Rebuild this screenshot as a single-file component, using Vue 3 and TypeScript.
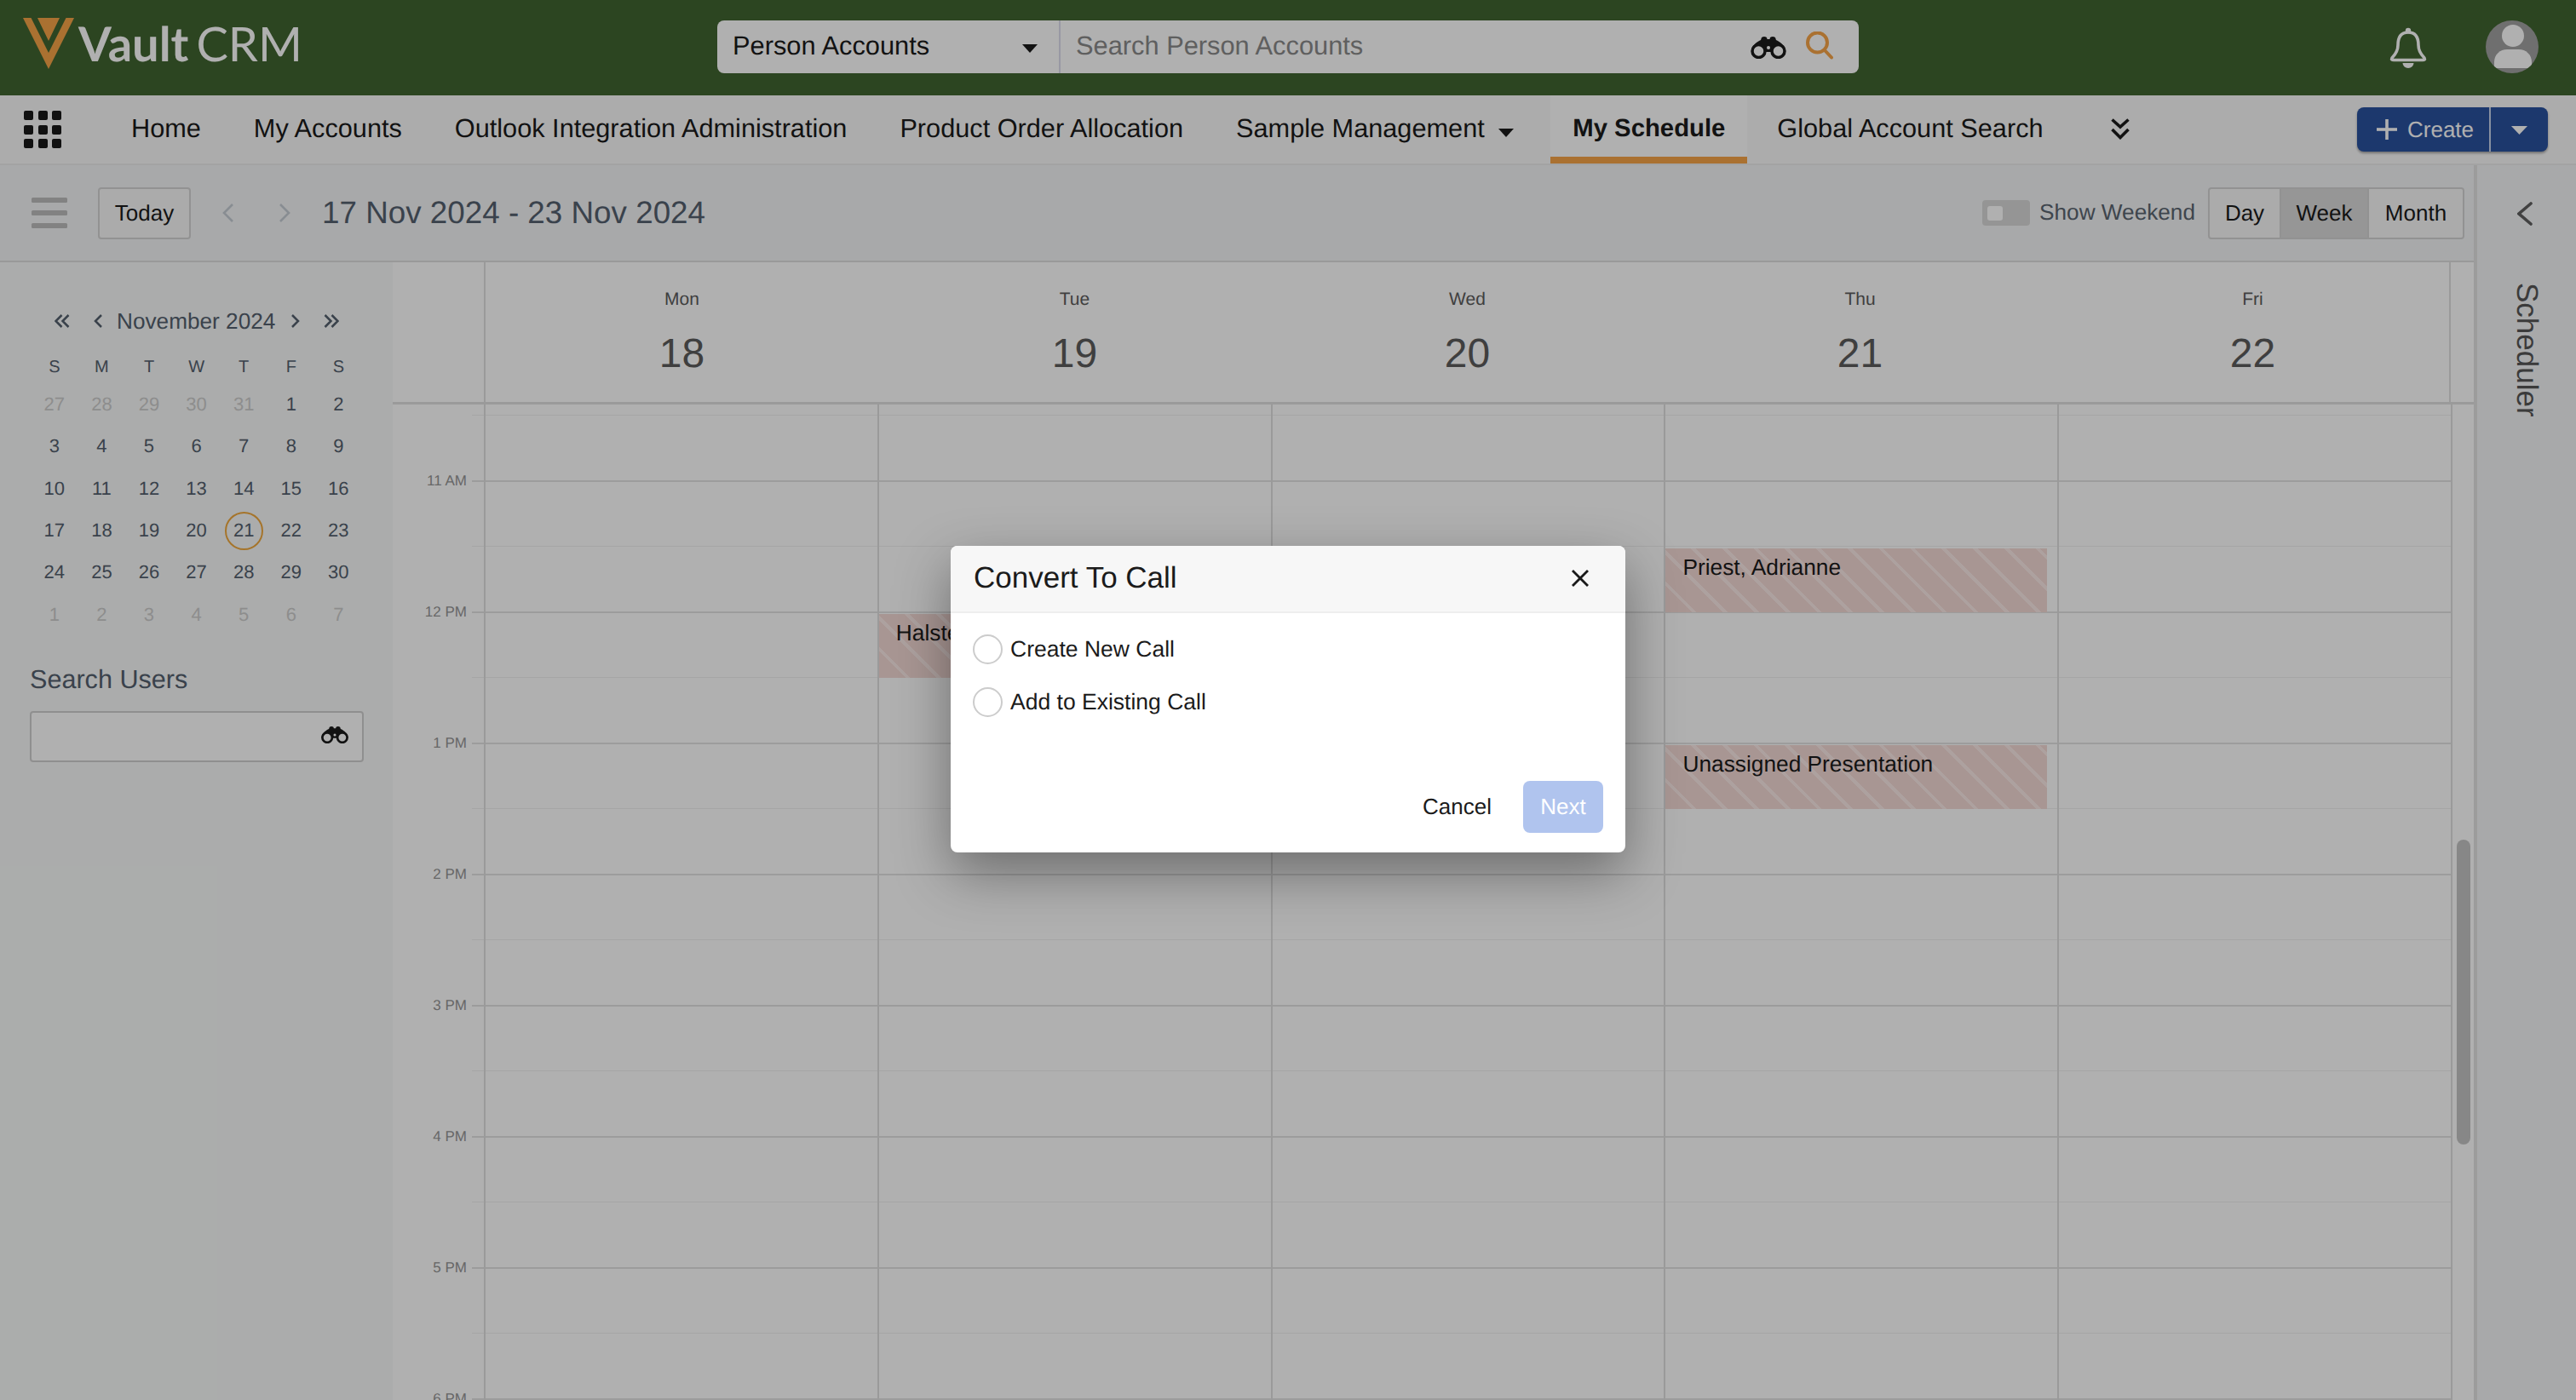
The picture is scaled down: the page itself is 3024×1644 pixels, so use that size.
<script setup lang="ts">
interface DayCell { n: number; muted: boolean; today: boolean }
interface Slot { hour: boolean; label: string }
interface CalEvent { title: string; col: number; top: number }

const navItems: string[] = ['Home', 'My Accounts', 'Outlook Integration Administration', 'Product Order Allocation']
const weekdays: string[] = ['S', 'M', 'T', 'W', 'T', 'F', 'S']

const cells: DayCell[] = []
for (const n of [27, 28, 29, 30, 31]) cells.push({ n, muted: true, today: false })
for (let n = 1; n <= 30; n++) cells.push({ n, muted: false, today: n === 21 })
for (let n = 1; n <= 7; n++) cells.push({ n, muted: true, today: false })

const days = [
  { name: 'Mon', num: 18 },
  { name: 'Tue', num: 19 },
  { name: 'Wed', num: 20 },
  { name: 'Thu', num: 21 },
  { name: 'Fri', num: 22 },
]

const hourLabels: string[] = ['11 AM', '12 PM', '1 PM', '2 PM', '3 PM', '4 PM', '5 PM', '6 PM']
const slots: Slot[] = []
for (let i = 0; i < 16; i++) {
  const hour = i % 2 === 1
  slots.push({ hour, label: hour ? hourLabels[(i - 1) / 2] : '' })
}

const events: CalEvent[] = [
  { title: 'Halsted', col: 1, top: 246 },
  { title: 'Priest, Adrianne', col: 3, top: 169 },
  { title: 'Unassigned Presentation', col: 3, top: 400 },
]
const eventsFor = (col: number): CalEvent[] => events.filter((e) => e.col === col)
</script>

<template>
  <div class="app">
    <header class="topbar">
      <svg class="logo" width="60" height="60" viewBox="0 0 60 60">
        <polygon points="0,0 60,0 30,60" fill="#f6a448" />
        <polygon points="9.500,0 17,0 30,27 43,0 50.500,0 30,41" fill="#406431" />
      </svg>
      <div class="brand"><span class="vault">Vault</span><span class="crm">CRM</span></div>

      <div class="searchbar">
        <div class="scope">
          <span>Person Accounts</span>
          <svg class="scope-caret" width="18" height="10" viewBox="0 0 18 10"><polygon points="0,0 18,0 9,10" fill="#1b1b1b" /></svg>
        </div>
        <div class="query">
          <span class="placeholder">Search Person Accounts</span>
          <svg class="binoculars" width="44" height="26" viewBox="0 0 44 26">
            <path d="M2 15 C4 9 9 6 13 4 L14 1 Q17 -1 20 1 L20.500 3 H23.500 L24 1 Q27 -1 30 1 L31 4 C35 6 40 9 42 15 L42 18 H2Z" fill="#1b1b1b" />
            <circle cx="10.500" cy="17" r="7.500" fill="#fff" stroke="#1b1b1b" stroke-width="3.500" />
            <circle cx="33.500" cy="17" r="7.500" fill="#fff" stroke="#1b1b1b" stroke-width="3.500" />
            <circle cx="22" cy="13" r="2" fill="#fff" />
          </svg>
          <svg class="magnifier" width="32" height="36" viewBox="0 0 32 36" fill="none" stroke="#f6a448" stroke-width="4">
            <circle cx="13.500" cy="13" r="11.500" />
            <line x1="22" y1="22" x2="30" y2="30.500" stroke-linecap="round" />
          </svg>
        </div>
      </div>

      <svg class="bell" width="44" height="48" viewBox="0 0 44 48">
        <path d="M22 6 C13 6 10 12 10 21 C10 28 7 32 3 36 C2 38 3 38.500 5 38.500 H39 C41 38.500 42 38 41 36 C37 32 34 28 34 21 C34 12 31 6 22 6Z" fill="none" stroke="#fff" stroke-width="3.600" stroke-linejoin="round" />
        <circle cx="22" cy="4" r="3.200" fill="#fff" />
        <path d="M15.500 42 H28.500 A6.500 6 0 0 1 15.500 42Z" fill="#fff" />
      </svg>
      <svg class="avatar" width="62" height="62" viewBox="0 0 62 62">
        <defs><clipPath id="avatar-clip"><circle cx="31" cy="31" r="31" /></clipPath></defs>
        <g clip-path="url(#avatar-clip)">
          <rect width="62" height="62" fill="#a1a1a1" />
          <circle cx="32" cy="18" r="13" fill="#fff" />
          <path d="M10 56 V49 C10 40 17 34 25 34 H39 C47 34 54 40 54 49 V56Z" fill="#fff" />
        </g>
      </svg>
    </header>

    <nav class="navbar">
      <div class="apps">
        <i v-for="n in 9" :key="n" class="apps-dot"></i>
      </div>
      <a v-for="item in navItems" :key="item" class="nav-item">{{ item }}</a>
      <a class="nav-item sample">Sample Management
        <svg width="18" height="10" viewBox="0 0 18 10"><polygon points="0,0 18,0 9,10" fill="#1b1b1b" /></svg>
      </a>
      <a class="nav-item active">My Schedule</a>
      <a class="nav-item global">Global Account Search</a>
      <svg class="more" width="22" height="25" viewBox="0 0 22 25" fill="none" stroke="#1b1b1b" stroke-width="3.600">
        <polyline points="1.500,1.500 11,10 20.500,1.500" />
        <polyline points="1.500,13 11,22.500 20.500,13" />
      </svg>
      <div class="create">
        <div class="create-main">
          <svg width="24" height="24" viewBox="0 0 24 24" stroke="#fff" stroke-width="3.600"><line x1="12" y1="0" x2="12" y2="24" /><line x1="0" y1="12" x2="24" y2="12" /></svg>
          <span>Create</span>
        </div>
        <div class="create-caret">
          <svg width="19" height="10" viewBox="0 0 19 10"><polygon points="0,0 19,0 9.500,10" fill="#fff" /></svg>
        </div>
      </div>
    </nav>

    <div class="workspace">
      <main class="main">
        <div class="toolbar">
          <div class="hamburger"><i></i><i></i><i></i></div>
          <button class="btn today">Today</button>
          <svg class="tool-chev prev" width="14" height="22" viewBox="0 0 14 22" fill="none" stroke="#c6ccd4" stroke-width="2.600"><polyline points="12,1 2,11 12,21" /></svg>
          <svg class="tool-chev next" width="14" height="22" viewBox="0 0 14 22" fill="none" stroke="#c6ccd4" stroke-width="2.600"><polyline points="2,1 12,11 2,21" /></svg>
          <h1 class="range">17 Nov 2024 - 23 Nov 2024</h1>
          <div class="toggle"><i></i></div>
          <span class="toggle-label">Show Weekend</span>
          <div class="segment">
            <button class="seg day">Day</button>
            <button class="seg week">Week</button>
            <button class="seg month">Month</button>
          </div>
        </div>

        <div class="content">
          <aside class="sidebar">
            <div class="mini-head">
              <svg class="m1" width="18" height="16" viewBox="0 0 18 16" fill="none" stroke="#54606e" stroke-width="2.500"><polyline points="8.500,1 1.500,8 8.500,15" /><polyline points="16.500,1 9.500,8 16.500,15" /></svg>
              <svg class="m2" width="10" height="16" viewBox="0 0 10 16" fill="none" stroke="#54606e" stroke-width="2.500"><polyline points="9,1 2,8 9,15" /></svg>
              <span class="mini-title">November 2024</span>
              <svg class="m3" width="10" height="16" viewBox="0 0 10 16" fill="none" stroke="#54606e" stroke-width="2.500"><polyline points="1,1 8,8 1,15" /></svg>
              <svg class="m4" width="18" height="16" viewBox="0 0 18 16" fill="none" stroke="#54606e" stroke-width="2.500"><polyline points="1.500,1 8.500,8 1.500,15" /><polyline points="9.500,1 16.500,8 9.500,15" /></svg>
            </div>
            <div class="weekdays">
              <span v-for="(d, i) in weekdays" :key="i">{{ d }}</span>
            </div>
            <div class="mini-grid">
              <div v-for="(c, i) in cells" :key="i" class="mini-cell" :class="{ muted: c.muted }">
                <span :class="{ today: c.today }">{{ c.n }}</span>
              </div>
            </div>
            <h2 class="search-title">Search Users</h2>
            <div class="user-input">
              <svg width="34" height="20" viewBox="0 0 44 26">
                <path d="M2 15 C4 9 9 6 13 4 L14 1 Q17 -1 20 1 L20.500 3 H23.500 L24 1 Q27 -1 30 1 L31 4 C35 6 40 9 42 15 L42 18 H2Z" fill="#1b1b1b" />
                <circle cx="10.500" cy="17" r="7.500" fill="#fff" stroke="#1b1b1b" stroke-width="3.500" />
                <circle cx="33.500" cy="17" r="7.500" fill="#fff" stroke="#1b1b1b" stroke-width="3.500" />
                <circle cx="22" cy="13" r="2" fill="#fff" />
              </svg>
            </div>
          </aside>

          <section class="calendar">
            <div class="cal-head">
              <div class="cal-head-gutter"></div>
              <div class="cal-head-days">
                <div v-for="d in days" :key="d.num" class="head-day">
                  <span class="head-name">{{ d.name }}</span>
                  <span class="head-num">{{ d.num }}</span>
                </div>
              </div>
              <div class="cal-head-end"></div>
            </div>
            <div class="cal-body">
              <div class="grid">
                <div class="slots">
                  <div v-for="(s, i) in slots" :key="i" class="slot">
                    <span class="slot-label">{{ s.label }}</span>
                    <div class="slot-line" :class="{ hour: s.hour }"></div>
                  </div>
                </div>
                <div class="columns">
                  <div v-for="(d, col) in days" :key="d.num" class="column">
                    <div v-for="e in eventsFor(col)" :key="e.title" class="event" :style="{ top: e.top + 'px' }">{{ e.title }}</div>
                  </div>
                </div>
              </div>
              <div class="track"><div class="thumb"></div></div>
            </div>
          </section>
        </div>
      </main>

      <aside class="scheduler">
        <svg width="18" height="28" viewBox="0 0 18 28" fill="none" stroke="#5f5f5f" stroke-width="3.600" stroke-linecap="round"><polyline points="16,2 2,14 16,26" /></svg>
        <span class="scheduler-label">Scheduler</span>
      </aside>
    </div>

    <div class="overlay">
      <div class="modal">
        <div class="modal-head">
          <span>Convert To Call</span>
          <svg width="20" height="20" viewBox="0 0 20 20" stroke="#1a1a1a" stroke-width="2.800"><line x1="1" y1="1" x2="19" y2="19" /><line x1="19" y1="1" x2="1" y2="19" /></svg>
        </div>
        <div class="modal-body">
          <label class="radio"><i></i>Create New Call</label>
          <label class="radio"><i></i>Add to Existing Call</label>
        </div>
        <div class="modal-foot">
          <button class="cancel">Cancel</button>
          <button class="next-btn">Next</button>
        </div>
      </div>
    </div>
  </div>
</template>

<style scoped>
.app {
  position: relative;
  width: 3024px;
  height: 1644px;
  overflow: hidden;
  display: flex;
  flex-direction: column;
  font-family: "Liberation Sans", Arial, sans-serif;
  text-rendering: geometricPrecision;
  color: #1b1b1b;
  background: #fff;
}
button {
  font-family: inherit;
  text-rendering: geometricPrecision;
  cursor: pointer;
}
i {
  display: block;
}

/* top bar */
.topbar {
  flex: none;
  height: 112px;
  display: flex;
  align-items: flex-start;
  background: #406431;
}
.logo {
  margin: 21px 0 0 27px;
  flex: none;
}
.brand {
  margin: 14px 0 0 5px;
  width: 760px;
  height: 74px;
  line-height: 74px;
  font-family: Lato, sans-serif;
  font-size: 56px;
  color: #fff;
  white-space: nowrap;
}
.vault {
  font-weight: 700;
}
.crm {
  font-weight: 400;
  margin-left: 9px;
}
.searchbar {
  position: absolute;
  left: 842px;
  top: 24px;
  width: 1340px;
  height: 62px;
  display: flex;
  border-radius: 8px;
  background: #fff;
  font-size: 30.800px;
  line-height: 59px;
}
.scope {
  flex: none;
  width: 403px;
  box-sizing: border-box;
  padding-left: 18px;
  border-right: 2px solid #dcdcec;
  display: flex;
  align-items: flex-start;
}
.scope-caret {
  margin: 28px 25px 0 auto;
}
.query {
  flex: 1;
  display: flex;
  align-items: flex-start;
  padding-left: 18px;
}
.placeholder {
  color: #8a8a8a;
}
.binoculars {
  margin: 19px 0 0 auto;
}
.magnifier {
  margin: 13px 30px 0 22px;
}
.bell {
  position: absolute;
  left: 2805px;
  top: 32px;
}
.avatar {
  position: absolute;
  left: 2918px;
  top: 24px;
}

/* nav */
.navbar {
  flex: none;
  height: 82px;
  box-sizing: border-box;
  border-bottom: 2px solid #ededed;
  background: #fafafa;
  display: flex;
  align-items: stretch;
  font-size: 30.700px;
  line-height: 78px;
  white-space: nowrap;
  padding-right: 33px;
}
.apps {
  flex: none;
  width: 44px;
  height: 44px;
  margin: 18px 51px 0 28px;
  display: grid;
  grid-template-columns: repeat(3, 11px);
  grid-auto-rows: 11px;
  gap: 5.500px;
}
.apps-dot {
  background: #191919;
  border-radius: 2px;
}
.nav-item {
  padding: 0 31px;
  flex: none;
}
.nav-item svg {
  margin-left: 8px;
  vertical-align: 0;
}
.active {
  margin-left: 12px;
  padding: 0 26px;
  font-size: 29.300px;
  font-weight: 700;
  background: #fff;
  height: 80px;
  box-sizing: border-box;
  border-bottom: 8px solid #f6a448;
}
.global {
  padding: 0 0 0 35px;
}
.more {
  margin: 27px 0 0 79px;
}
.create {
  margin: 14px 0 0 auto;
  width: 224px;
  height: 52px;
  border-radius: 8px;
  background: #29519f;
  box-shadow: 0 2px 3px rgba(0, 0, 0, 0.35);
  color: #fff;
  display: flex;
  font-size: 26px;
  line-height: 50px;
}
.create-main {
  width: 157px;
  box-sizing: border-box;
  padding-left: 23px;
  border-right: 2px solid #c6d3ea;
  display: flex;
  align-items: center;
  gap: 12px;
}
.create-caret {
  flex: 1;
  display: flex;
  align-items: center;
  justify-content: center;
  padding-top: 2px;
}

/* workspace */
.workspace {
  flex: 1;
  min-height: 0;
  display: flex;
}
.main {
  flex: none;
  width: 2904px;
  display: flex;
  flex-direction: column;
}
.toolbar {
  flex: none;
  height: 114px;
  box-sizing: border-box;
  border-bottom: 2px solid #dedede;
  background: #f3f5f7;
  display: flex;
  align-items: center;
  padding: 0 11px 0 37px;
}
.hamburger {
  flex: none;
  width: 42px;
  display: flex;
  flex-direction: column;
  gap: 9px;
  margin-right: 36px;
}
.hamburger i {
  height: 6px;
  border-radius: 1.500px;
  background: #bdbdbd;
}
.btn {
  height: 61px;
  box-sizing: border-box;
  border: 2px solid #d4d4d4;
  border-radius: 4px;
  background: #f8f8f8;
  font-size: 26px;
  color: #1b1b1b;
  padding: 0;
}
.btn.today {
  width: 109px;
}
.tool-chev.prev {
  margin-left: 37px;
}
.tool-chev.next {
  margin-left: 52px;
}
.range {
  margin: 0 0 0 37px;
  font-size: 36.800px;
  font-weight: 400;
  color: #54606e;
  white-space: nowrap;
}
.toggle {
  margin-left: auto;
  width: 56px;
  height: 30px;
  box-sizing: border-box;
  padding: 7px 6px;
  border-radius: 4px;
  background: #d8d8d8;
}
.toggle i {
  width: 18px;
  height: 17px;
  border-radius: 3px;
  background: #fff;
}
.toggle-label {
  margin: 0 15px 2px 11px;
  font-size: 26.200px;
  color: #5b6570;
  white-space: nowrap;
}
.segment {
  display: flex;
  height: 61px;
}
.seg {
  height: 61px;
  box-sizing: border-box;
  border: 2px solid #d4d4d4;
  background: #f8f8f8;
  font-size: 26px;
  color: #1b1b1b;
  padding: 0;
}
.seg + .seg {
  border-left: none;
}
.seg.day {
  width: 86px;
  border-radius: 4px 0 0 4px;
}
.seg.week {
  width: 103px;
  background: #d9d9d9;
}
.seg.month {
  width: 112px;
  border-radius: 0 4px 4px 0;
}

.content {
  flex: 1;
  min-height: 0;
  display: flex;
}

/* sidebar */
.sidebar {
  flex: none;
  width: 461px;
  box-sizing: border-box;
  padding: 44px 0 0 36px;
  background: #f8faf9;
  color: #54606e;
}
.mini-head {
  height: 50px;
  display: flex;
  align-items: center;
  font-size: 26.200px;
}
.m1 {
  margin-left: 28px;
}
.m2 {
  margin-left: 28px;
}
.mini-title {
  margin-left: 17px;
  width: 186px;
  white-space: nowrap;
}
.m3 {
  margin-left: 19px;
}
.m4 {
  margin-left: 28px;
}
.weekdays {
  display: grid;
  grid-template-columns: repeat(7, 55.600px);
  height: 48.500px;
  line-height: 58px;
  font-size: 20px;
  text-align: center;
}
.mini-grid {
  display: grid;
  grid-template-columns: repeat(7, 55.600px);
  grid-auto-rows: 49.300px;
  font-size: 22px;
}
.mini-cell {
  display: flex;
  align-items: center;
  justify-content: center;
}
.mini-cell.muted {
  color: #cdcdcd;
}
.mini-cell .today {
  width: 45px;
  height: 45px;
  box-sizing: border-box;
  border: 2px solid #f0a93f;
  border-radius: 50%;
  display: flex;
  align-items: center;
  justify-content: center;
}
.search-title {
  margin: 34px 0 0 -1px;
  font-size: 30.600px;
  line-height: 36px;
  font-weight: 400;
}
.user-input {
  margin: 19px 0 0 -1px;
  width: 392px;
  height: 60px;
  box-sizing: border-box;
  border: 2px solid #d0d0d0;
  border-radius: 4px;
  background: #fff;
  display: flex;
  align-items: center;
  justify-content: flex-end;
  padding: 0 15px 4px 0;
}

/* calendar */
.calendar {
  flex: 1;
  min-width: 0;
  display: flex;
  flex-direction: column;
  background: #fff;
}
.cal-head {
  flex: none;
  height: 167px;
  box-sizing: border-box;
  border-bottom: 3px solid #e0e0e0;
  display: flex;
}
.cal-head-gutter {
  flex: none;
  width: 107px;
  border-right: 2px solid #e0e0e0;
}
.cal-head-days {
  flex: none;
  width: 2305px;
  display: flex;
  border-right: 2px solid #e0e0e0;
}
.cal-head-end {
  flex: 1;
}
.head-day {
  flex: 1;
  display: flex;
  flex-direction: column;
  align-items: center;
  color: #5c5c5c;
}
.head-name {
  margin-top: 32px;
  font-size: 21px;
  line-height: 24px;
}
.head-num {
  margin-top: 24px;
  font-size: 48px;
  line-height: 56px;
}
.cal-body {
  flex: 1;
  min-height: 0;
  display: flex;
  overflow: hidden;
}
.grid {
  position: relative;
  flex: none;
  width: 2418px;
  padding-top: 12px;
  box-sizing: border-box;
}
.slot {
  height: 77px;
  display: flex;
}
.slot-label {
  flex: none;
  width: 87px;
  margin-top: -10px;
  height: 22px;
  line-height: 22px;
  font-size: 17px;
  text-align: right;
  color: #959595;
  white-space: nowrap;
}
.slot-line {
  flex: 1;
  margin-left: 6px;
  border-top: 1px solid #f0f0f0;
}
.slot-line.hour {
  border-top: 2px solid #e2e2e2;
}
.columns {
  position: absolute;
  left: 107px;
  top: 0;
  right: 0;
  bottom: 0;
  display: flex;
  border-right: 2px solid #e0e0e0;
}
.column {
  position: relative;
  flex: 1;
  border-left: 2px solid #e0e0e0;
}
.event {
  position: absolute;
  left: 0;
  width: 448px;
  height: 75px;
  box-sizing: border-box;
  padding: 5px 0 0 20px;
  font-size: 26.300px;
  line-height: 34px;
  white-space: nowrap;
  overflow: hidden;
  background: repeating-linear-gradient(45deg, #f4d9d6 0, #f4d9d6 22px, #fbeae7 22px, #fbeae7 26px);
}
.track {
  flex: 1;
  padding: 0 4px 0 5px;
}
.thumb {
  margin-top: 511px;
  width: 16px;
  height: 358px;
  border-radius: 8px;
  background: #c4c4c4;
}

/* right rail */
.scheduler {
  flex: 1;
  border-left: 4px solid #e2e2e2;
  background: #f3f5f7;
  display: flex;
  flex-direction: column;
  align-items: center;
  padding-top: 43px;
}
.scheduler > svg {
  margin-right: 4px;
}
.scheduler-label {
  margin-top: 67px;
  writing-mode: vertical-rl;
  font-size: 35px;
  line-height: 40px;
  color: #565656;
}

/* modal */
.overlay {
  position: absolute;
  inset: 0;
  box-sizing: border-box;
  padding-bottom: 2px;
  background: rgba(0, 0, 0, 0.31);
  display: flex;
  align-items: center;
  justify-content: center;
}
.modal {
  width: 792px;
  height: 360px;
  border-radius: 8px;
  background: #fff;
  box-shadow: 0 24px 64px rgba(0, 0, 0, 0.38);
  display: flex;
  flex-direction: column;
  overflow: hidden;
}
.modal-head {
  flex: none;
  height: 79px;
  box-sizing: border-box;
  border-bottom: 2px solid #eeeeee;
  background: #f7f7f7;
  padding: 0 43px 2px 27px;
  display: flex;
  align-items: center;
  justify-content: space-between;
  font-size: 35px;
}
.modal-body {
  flex: none;
  height: 197px;
  padding: 25px 0 0 26px;
  box-sizing: border-box;
  display: flex;
  flex-direction: column;
  gap: 27px;
}
.radio {
  display: flex;
  align-items: center;
  height: 35px;
  font-size: 26.500px;
  gap: 9px;
}
.radio i {
  width: 35px;
  height: 35px;
  box-sizing: border-box;
  border: 2px solid #cccccc;
  border-radius: 50%;
}
.modal-foot {
  flex: 1;
  display: flex;
  align-items: flex-start;
  justify-content: flex-end;
  padding-right: 26px;
}
.cancel {
  border: none;
  background: none;
  font-size: 26px;
  height: 61px;
  padding: 0;
  margin-right: 37px;
  color: #1b1b1b;
}
.next-btn {
  width: 94px;
  height: 61px;
  border: none;
  border-radius: 8px;
  background: #b0c4ee;
  color: #fff;
  font-size: 26px;
  padding: 0;
}
</style>

<style>
html,
body {
  margin: 0;
  overflow: hidden;
}
</style>
